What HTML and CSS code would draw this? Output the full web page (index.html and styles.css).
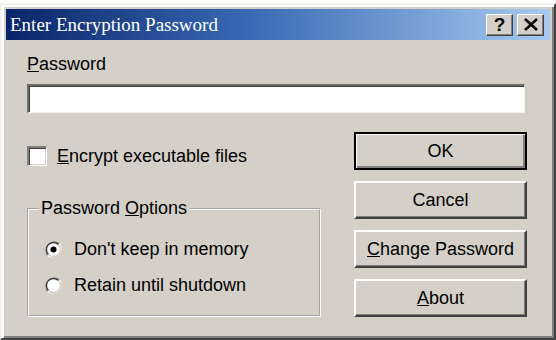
FILE: index.html
```html
<!DOCTYPE html>
<html>
<head>
<meta charset="utf-8">
<link rel="stylesheet" href="styles.css">
</head>
<body>
<div class="window">
  <div class="titlebar">
    <span class="title">Enter Encryption Password</span>
    <div class="tbuttons">
      <span class="tbtn help">?</span>
      <span class="tbtn close">
        <svg width="14" height="13" viewBox="0 0 14 13"><path d="M1 1 L13 12 M13 1 L1 12" stroke="#000" stroke-width="2.6" fill="none"/></svg>
      </span>
    </div>
  </div>
  <div class="client">
    <div class="label"><u>P</u>assword</div>
    <div class="textbox"></div>
    <div class="lower">
      <div class="leftcol">
        <div class="check">
          <span class="checkbox"></span>
          <span class="ctext"><u>E</u>ncrypt executable files</span>
        </div>
        <fieldset class="group">
          <legend>Password <u>O</u>ptions</legend>
          <div class="radio">
            <svg class="rb" width="19" height="19" viewBox="0 0 19 19">
              <path d="M15.4 3.6 A8.5 8.5 0 0 0 3.6 15.4" stroke="#808080" stroke-width="1.4" fill="none"/>
              <path d="M3.6 15.4 A8.5 8.5 0 0 0 15.4 3.6" stroke="#ffffff" stroke-width="1.4" fill="none"/>
              <circle cx="9.5" cy="9.5" r="7" fill="#fff"/>
              <path d="M14.5 4.5 A7 7 0 0 0 4.5 14.5" stroke="#404040" stroke-width="1.4" fill="none"/>
              <path d="M4.5 14.5 A7 7 0 0 0 14.5 4.5" stroke="#d4d0c8" stroke-width="1.4" fill="none"/>
              <circle cx="9.5" cy="9.5" r="3" fill="#000"/>
            </svg>
            <span>Don't keep in memory</span>
          </div>
          <div class="radio">
            <svg class="rb" width="19" height="19" viewBox="0 0 19 19">
              <path d="M15.4 3.6 A8.5 8.5 0 0 0 3.6 15.4" stroke="#808080" stroke-width="1.4" fill="none"/>
              <path d="M3.6 15.4 A8.5 8.5 0 0 0 15.4 3.6" stroke="#ffffff" stroke-width="1.4" fill="none"/>
              <circle cx="9.5" cy="9.5" r="7" fill="#fff"/>
              <path d="M14.5 4.5 A7 7 0 0 0 4.5 14.5" stroke="#404040" stroke-width="1.4" fill="none"/>
              <path d="M4.5 14.5 A7 7 0 0 0 14.5 4.5" stroke="#d4d0c8" stroke-width="1.4" fill="none"/>
            </svg>
            <span>Retain until shutdown</span>
          </div>
        </fieldset>
      </div>
      <div class="buttons">
        <div class="btn default"><span class="inner">OK</span></div>
        <div class="btn"><span class="inner">Cancel</span></div>
        <div class="btn"><span class="inner"><u>C</u>hange Password</span></div>
        <div class="btn"><span class="inner"><u>A</u>bout</span></div>
      </div>
    </div>
  </div>
</div>
</body>
</html>
```

FILE: styles.css
```css
html, body {
  margin: 0;
  padding: 0;
  background: #ffffff;
}
body {
  padding-top: 3px;
  font-family: "Liberation Sans", Arial, sans-serif;
  font-size: 18px;
  color: #000;
}
.window {
  width: 556px;
  height: 337px;
  box-sizing: border-box;
  background: #d4d0c8;
  border-top: 2px solid #f2f1ee;
  border-left: 2px solid #f2f1ee;
  border-right: 2px solid #404040;
  border-bottom: 2px solid #404040;
  box-shadow: inset 2px 2px 0 #ffffff, inset -2px -2px 0 #808080;
  padding: 4px 4px 0 4px;
  display: flex;
  flex-direction: column;
}
.titlebar {
  height: 31px;
  background: linear-gradient(to right, #0a246a 0%, #3a6ab4 45%, #a6caf0 100%);
  display: flex;
  align-items: center;
  justify-content: space-between;
  padding: 0 6px 0 4px;
}
.title {
  font-family: "Liberation Serif", "Times New Roman", serif;
  font-size: 19px;
  color: #ffffff;
}
.tbuttons {
  display: flex;
  gap: 4px;
  align-items: center;
}
.tbtn {
  width: 27px;
  height: 22px;
  box-sizing: border-box;
  background: #d4d0c8;
  border-top: 1px solid #ffffff;
  border-left: 1px solid #ffffff;
  border-right: 1px solid #404040;
  border-bottom: 1px solid #404040;
  box-shadow: inset -1px -1px 0 #808080;
  display: flex;
  align-items: center;
  justify-content: center;
  font-weight: bold;
  font-size: 19px;
  line-height: 1;
}
.client {
  padding: 14px 23px 0 21px;
}
.label {
  line-height: 21px;
  height: 21px;
}
.textbox {
  margin-top: 9px;
  height: 29px;
  width: 498px;
  box-sizing: border-box;
  background: #fff;
  border-top: 2px solid #6d6b66;
  border-left: 2px solid #6d6b66;
  border-right: 1px solid #f4f3f0;
  border-bottom: 1px solid #f4f3f0;
  box-shadow: inset 1px 1px 0 #404040;
}
.lower {
  margin-top: 19px;
  display: flex;
  justify-content: space-between;
}
.leftcol {
  width: 294px;
  display: flex;
  flex-direction: column;
}
.check {
  margin-top: 14px;
  display: flex;
  align-items: center;
  height: 20px;
  gap: 10px;
}
.checkbox {
  width: 20px;
  height: 20px;
  box-sizing: border-box;
  background: #fff;
  border-top: 2px solid #808080;
  border-left: 2px solid #808080;
  border-right: 1px solid #fff;
  border-bottom: 1px solid #fff;
  box-shadow: inset 1px 1px 0 #404040, inset -1px -1px 0 #d4d0c8;
}
.group {
  margin: 32px 0 0 0;
  padding: 20px 0 0 15px;
  height: 119px;
  box-sizing: border-box;
  border: 2px groove #f8f8f8;
  min-width: 0;
}
.group legend {
  padding: 0 2px;
  margin-left: -5px;
  line-height: 21px;
}
.radio {
  display: flex;
  align-items: center;
  height: 21px;
  gap: 11px;
  margin-bottom: 15px;
}
.rb {
  display: block;
}
.buttons {
  width: 173px;
  display: flex;
  flex-direction: column;
  gap: 11px;
}
.btn {
  height: 38px;
  box-sizing: border-box;
  background: #d4d0c8;
  border-top: 2px solid #ffffff;
  border-left: 2px solid #ffffff;
  border-right: 2px solid #404040;
  border-bottom: 2px solid #404040;
  box-shadow: inset -1px -1px 0 #808080;
  display: flex;
  align-items: center;
  justify-content: center;
}
.btn.default {
  border: 2px solid #000;
  box-shadow: inset 1px 1px 0 #ffffff, inset -2px -2px 0 #808080;
}
.inner {
  line-height: 21px;
}
```
